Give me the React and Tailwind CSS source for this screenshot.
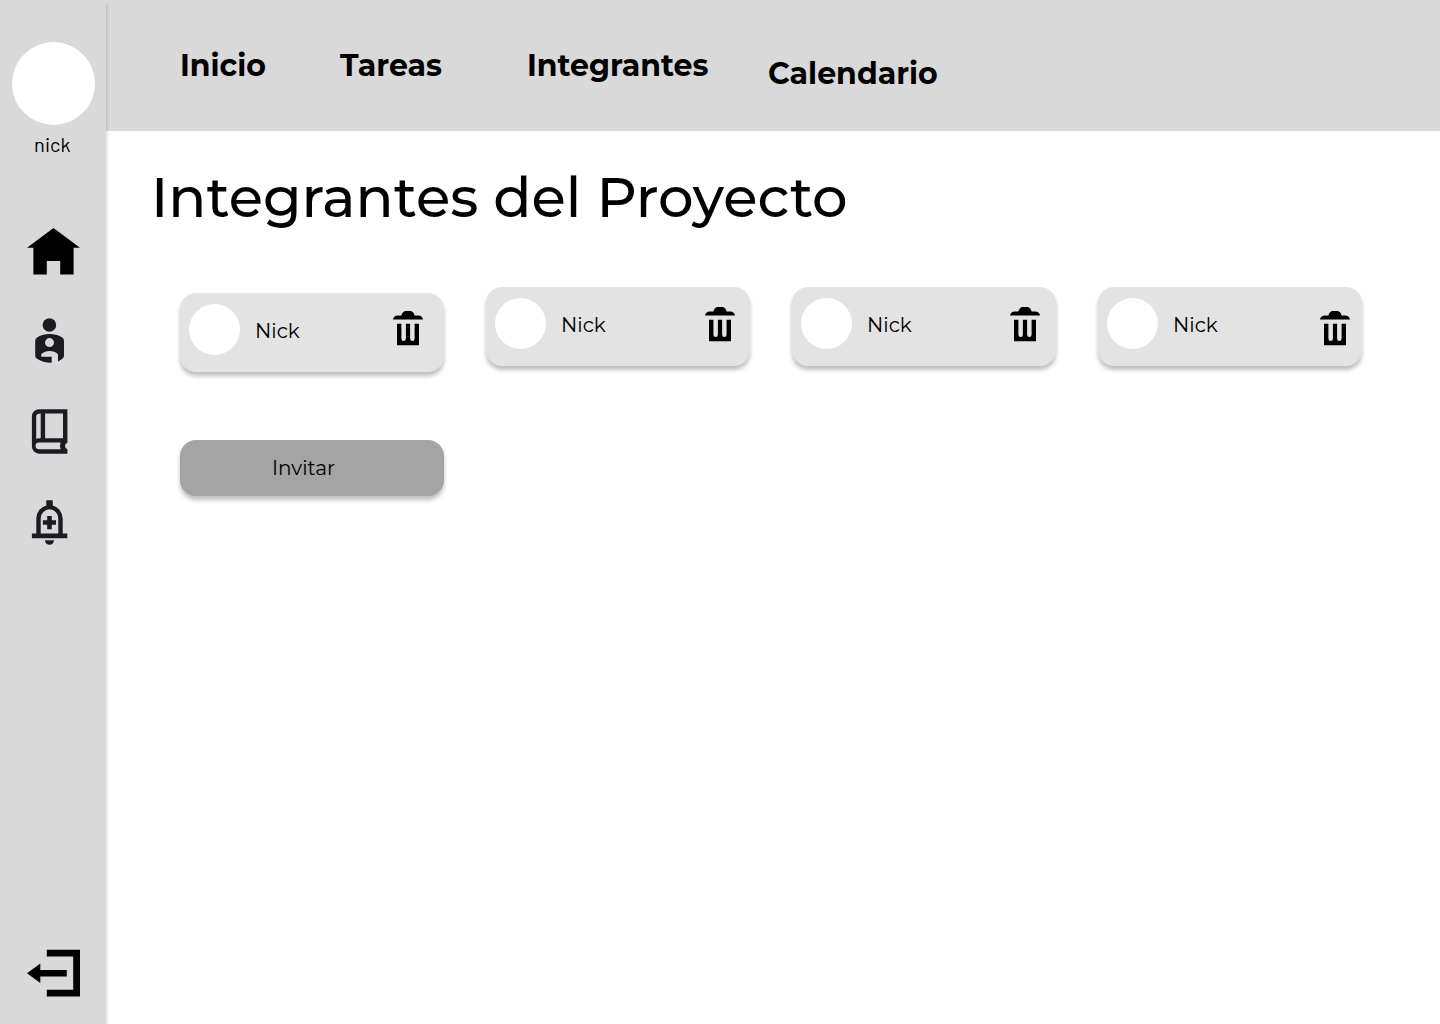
const font = "font-['Montserrat','Inter',sans-serif]";

function HomeIcon() {
  return (
    <svg width="54" height="48" viewBox="27 228 54 48" className="block">
      <path d="M53.5 228 80 247.7H73.6V274.4H60.2V261H46.8V274.4H33.4V247.7H27Z" fill="#000" />
    </svg>
  );
}

function PersonIcon() {
  return (
    <svg width="32" height="46" viewBox="34 318 32 46" className="block">
      <circle cx="49.4" cy="325" r="6.8" fill="#1d1b20" />
      <path
        fillRule="evenodd"
        fill="#1d1b20"
        d="M35.2 341Q35.2 338.8 36.8 337.7Q42 334 49.6 334Q57.4 334 62.5 337.7Q64 338.8 64 341V355.4Q64 357.4 62.6 358.6Q60.8 360.4 58 361.4V354.2Q54.5 350.9 49.6 350.9Q44.8 350.9 41.3 354.2V356.7H51.7V362.8Q42.6 362.8 36.6 358.6Q35.2 357.4 35.2 355.4ZM49.5 338.1A4.5 4.5 0 1 0 49.5 347.1A4.5 4.5 0 1 0 49.5 338.1Z"
      />
    </svg>
  );
}

function BookIcon() {
  return (
    <svg width="37" height="46" viewBox="31 409 37 46" className="block">
      <path
        fillRule="evenodd"
        fill="#1d1b20"
        d="M39 409.2H67.4V442.7A3.4 3.4 0 0 0 67.4 449.2V453.7H39A7.2 7.2 0 0 1 31.9 446.5V416.4A7.2 7.2 0 0 1 39 409.2ZM36.2 438.8V416.4Q36.2 413.8 40.7 413.6V438.2H39Q37.5 438.2 36.2 438.8ZM45.1 413.6H63V438.2H45.1ZM39 442.4H60.6Q59.2 446 60.6 449.3H39A3.4 3.4 0 0 1 39 442.4Z"
      />
    </svg>
  );
}

function BellIcon() {
  return (
    <svg width="37" height="46" viewBox="31 500 37 46" className="block">
      <path
        fillRule="evenodd"
        fill="#1d1b20"
        d="M31.9 538.2V533.6H36.3V518.5A13.4 13.4 0 0 1 46.3 505.6V500.3H52.8V505.6A13.4 13.4 0 0 1 62.7 518.5V533.6H67.3V538.2ZM40.7 533.6H58.3V518.5A8.8 9.2 0 0 0 40.7 518.5Z"
      />
      <path d="M47.2 516H51.8V520.3H56V524.8H51.8V529.2H47.2V524.8H42.9V520.3H47.2Z" fill="#1d1b20" />
      <path d="M45 540.2H54A4.5 4.5 0 0 1 45 540.2Z" fill="#1d1b20" />
    </svg>
  );
}

function LogoutIcon() {
  return (
    <svg width="54" height="48" viewBox="27 949 54 48" className="block">
      <path d="M46.8 949.8H80V996.4H46.8V989.8H73.2V956.4H46.8Z" fill="#000" />
      <path d="M27 973.2 40.3 963.4V970H66.8V976.6H40.3V983Z" fill="#000" />
    </svg>
  );
}

function TrashIcon() {
  return (
    <svg width="30" height="35" viewBox="0 0 30 35" className="block">
      <path d="M0 8.6Q0.3 4.6 5 4.4H8.4Q9.4 0.2 13 0H17Q20.6 0.2 21.6 4.4H25Q29.7 4.6 30 8.6Z" fill="#000" />
      <path
        d="M4 12.8H8.4V27.5Q8.4 30 10.7 30Q12.9 30 12.9 27.5V12.8H17.1V27.5Q17.1 30 19.3 30Q21.6 30 21.6 27.5V12.8H26V34.3H4Z"
        fill="#000"
      />
    </svg>
  );
}

const members = [
  { name: "Nick", card: "mt-1.5", trash: "mt-[18px] mr-[21px]" },
  { name: "Nick", card: "", trash: "mt-5 mr-[15px]" },
  { name: "Nick", card: "", trash: "mt-5 mr-4" },
  { name: "Nick", card: "", trash: "mt-6 mr-3" },
];

function MemberCard({ member }) {
  return (
    <article
      className={`flex h-[79px] w-[264px] items-start rounded-2xl bg-[#e3e3e3] shadow-[0_4px_4px_rgba(0,0,0,0.25)] ${member.card}`}
    >
      <div className="mt-[11px] ml-[9px] size-[51px] rounded-full bg-white" />
      <span className="mt-[26px] ml-[15px] text-[20px] leading-6">{member.name}</span>
      <button aria-label="Eliminar" className={`ml-auto ${member.trash}`}>
        <TrashIcon />
      </button>
    </article>
  );
}

export default function App() {
  return (
    <div className={`flex h-[1024px] w-[1440px] overflow-hidden bg-white text-black ${font}`}>
      <aside className="relative z-10 flex w-[106px] shrink-0 flex-col bg-[#d9d9d9] shadow-[0_4px_4px_rgba(0,0,0,0.25)]">
        <div className="mt-[42px] ml-3 size-[83px] rounded-full bg-white" />
        <span className="mt-[7px] ml-[34px] font-['Barlow','Roboto',sans-serif] text-[20px] leading-6 tracking-[0.1px]">nick</span>
        <nav className="flex flex-col">
          <a className="mt-[72px] ml-[27px]"><HomeIcon /></a>
          <a className="mt-[42px] ml-[34px]"><PersonIcon /></a>
          <a className="mt-[45px] ml-[31px]"><BookIcon /></a>
          <a className="mt-[45px] ml-[31px]"><BellIcon /></a>
        </nav>
        <a className="mt-auto mb-[27px] ml-[27px]"><LogoutIcon /></a>
      </aside>
      <div className="flex grow flex-col">
        <header className="flex h-[131px] items-start bg-[#d9d9d9] pt-[47px] pl-[73px] text-[30px] leading-[37px] font-bold whitespace-nowrap">
          <a className="ml-px w-[160px]">Inicio</a>
          <a className="w-[187px]">Tareas</a>
          <a className="w-[241px]">Integrantes</a>
          <a className="mt-2">Calendario</a>
        </header>
        <main className="flex flex-col">
          <h1 className="mt-8 ml-[45px] text-[56px] leading-[68px] font-medium whitespace-nowrap">
            Integrantes del Proyecto
          </h1>
          <section className="mt-14 ml-[74px] flex items-start gap-[42px]">
            {members.map((member, i) => (
              <MemberCard key={i} member={member} />
            ))}
          </section>
          <button className="mt-[68px] ml-[74px] flex h-14 w-[264px] items-center rounded-2xl bg-[#a4a4a4] pl-[92px] text-[20px] shadow-[0_4px_4px_rgba(0,0,0,0.25)]">
            Invitar
          </button>
        </main>
      </div>
    </div>
  );
}
